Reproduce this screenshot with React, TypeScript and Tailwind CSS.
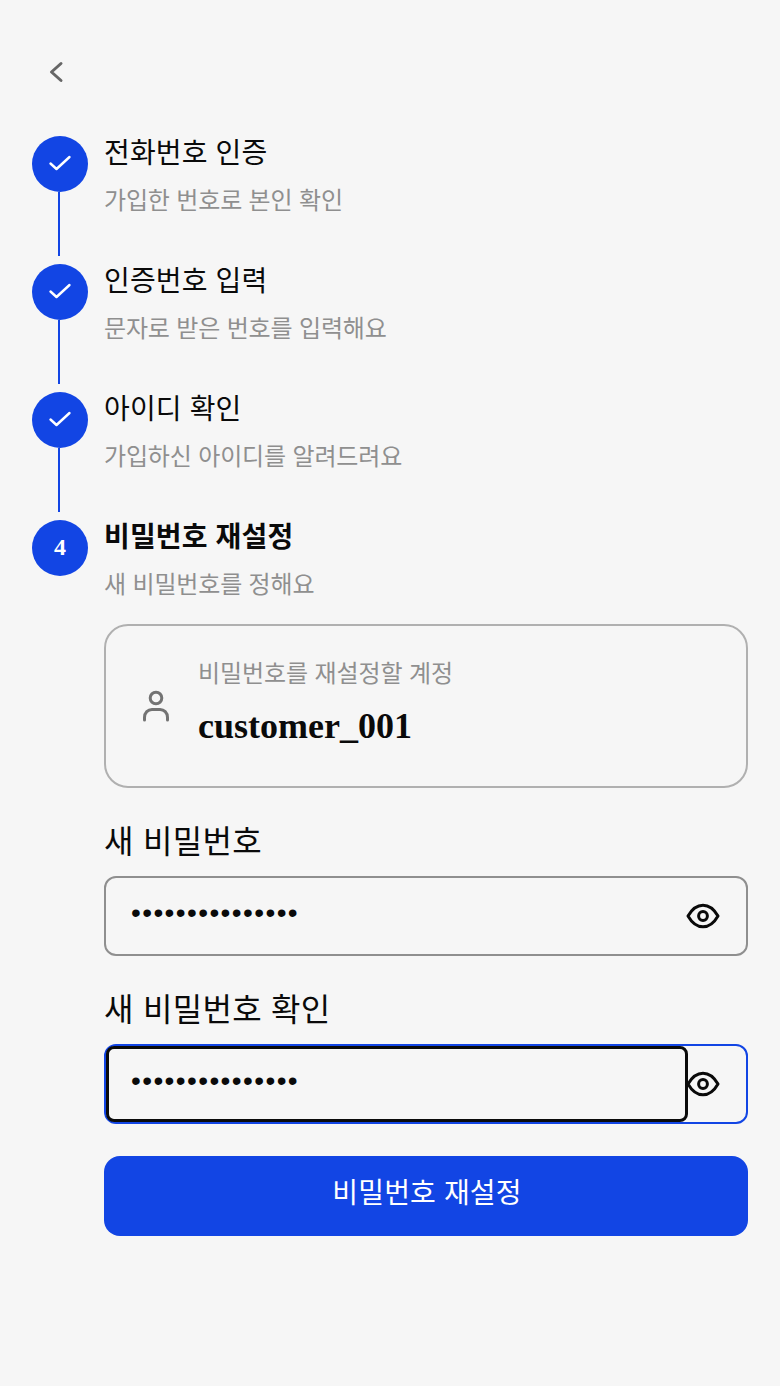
const FONT = "font-['Liberation_Sans','Noto_Sans_CJK_KR',sans-serif]";

const steps = [
  { title: '전화번호 인증', sub: '가입한 번호로 본인 확인' },
  { title: '인증번호 입력', sub: '문자로 받은 번호를 입력해요' },
  { title: '아이디 확인', sub: '가입하신 아이디를 알려드려요' },
];

function CheckIcon() {
  return (
    <svg width="24" height="24" viewBox="0 0 24 24" fill="none" stroke="white" strokeWidth="2.4" strokeLinecap="round" strokeLinejoin="round" className="-mt-0.5">
      <path d="M2.5 12.5 L8.5 18 L21.5 6" />
    </svg>
  );
}

function EyeIcon({ className }: { className?: string }) {
  return (
    <svg width="34" height="26" viewBox="0 0 34 26" fill="none" stroke="#0a0a0a" strokeWidth="3" strokeLinecap="round" strokeLinejoin="round" className={`shrink-0 ${className ?? ''}`}>
      <path d="M2 13 C6 6 11 2.2 17 2.2 C23 2.2 28 6 32 13 C28 20 23 23.8 17 23.8 C11 23.8 6 20 2 13 Z" />
      <circle cx="17" cy="13" r="4.4" />
    </svg>
  );
}

function DoneStep({ title, sub }: { title: string; sub: string }) {
  return (
    <div className="flex gap-4 h-32">
      <div className="w-14 flex flex-col items-center shrink-0">
        <div className="w-14 h-14 rounded-full bg-[#1245e4] flex items-center justify-center shrink-0">
          <CheckIcon />
        </div>
        <div className="w-0.5 h-16 bg-[#1245e4] -translate-x-px" />
      </div>
      <div className="pt-0.5">
        <div className="text-[28px] leading-[32px] tracking-[0.15px] text-[#0a0a0a]">{title}</div>
        <div className="text-2xl leading-[32px] tracking-[-0.15px] text-[#8f8f8f] mt-[15px]">{sub}</div>
      </div>
    </div>
  );
}

export default function App() {
  return (
    <div className={`w-[780px] h-[1386px] bg-[#f6f6f6] px-8 pt-14 ${FONT}`}>
      <button className="block ml-2 w-8 h-8 text-[#666666]">
        <svg width="32" height="32" viewBox="0 0 32 32" fill="none" stroke="currentColor" strokeWidth="3" strokeLinecap="round" strokeLinejoin="round">
          <path d="M21 7.5 L11.5 16 L21 24.5" />
        </svg>
      </button>

      <div className="mt-12">
        {steps.map((s) => (
          <DoneStep key={s.title} title={s.title} sub={s.sub} />
        ))}

        <div className="flex gap-4">
          <div className="w-14 h-14 rounded-full bg-[#1245e4] flex items-center justify-center shrink-0 text-white font-bold text-2xl font-['Liberation_Serif',serif]">
            <span className="-mt-0.5">4</span>
          </div>
          <div className="flex-1 min-w-0 pt-0.5">
            <div className="text-[28px] leading-[32px] tracking-[0.15px] font-bold text-[#0a0a0a]">비밀번호 재설정</div>
            <div className="text-2xl leading-[32px] tracking-[-0.15px] text-[#8f8f8f] mt-[15px]">새 비밀번호를 정해요</div>

            <div className="mt-[23px] h-[164px] rounded-3xl border-2 border-[#b0b0b0] flex items-center pl-9">
              <svg width="28" height="34" viewBox="0 0 28 34" fill="none" stroke="#737373" strokeWidth="3" strokeLinecap="round" className="shrink-0">
                <circle cx="14" cy="9" r="5.8" />
                <path d="M2.5 31 V28.5 C2.5 23.5 6 20.5 10 20.5 H18 C22 20.5 25.5 23.5 25.5 28.5 V31" />
              </svg>
              <div className="ml-[28px] -mt-2">
                <div className="text-2xl leading-[32px] tracking-[-0.1px] text-[#8f8f8f]">비밀번호를 재설정할 계정</div>
                <div className="text-4xl leading-[40px] font-bold text-[#0a0a0a] font-['Liberation_Serif',serif] mt-4">customer_001</div>
              </div>
            </div>

            <div className="mt-[34px] text-[32px] leading-[40px] tracking-[0.3px] text-[#0a0a0a]">새 비밀번호</div>
            <div className="mt-[14px] h-20 rounded-xl border-2 border-[#8f8f8f] flex items-center pl-[25px] pr-[26px]">
              <input type="password" readOnly value="customer_pass01" className="flex-1 min-w-0 h-[76px] pb-1.5 bg-transparent outline-none text-[28px] tracking-wider text-[#0a0a0a] font-['Liberation_Sans',sans-serif]" />
              <EyeIcon />
            </div>

            <div className="mt-[34px] text-[32px] leading-[40px] tracking-[0.3px] text-[#0a0a0a]">새 비밀번호 확인</div>
            <div className="mt-[14px] h-20 rounded-xl border-2 border-[#1245e4] flex items-center pr-[26px]">
              <input type="password" readOnly value="customer_pass01" className="w-[582px] h-[76px] pb-1.5 shrink-0 rounded-lg bg-transparent border-[3px] border-[#0a0a0a] outline-none pl-[22px] text-[28px] tracking-wider text-[#0a0a0a] font-['Liberation_Sans',sans-serif]" />
              <EyeIcon className="-ml-0.5" />
            </div>

            <button className="mt-8 w-full h-20 rounded-2xl bg-[#1245e4] text-white text-[28px] tracking-[0.15px] pb-1 pl-0.5">비밀번호 재설정</button>
          </div>
        </div>
      </div>
    </div>
  );
}
